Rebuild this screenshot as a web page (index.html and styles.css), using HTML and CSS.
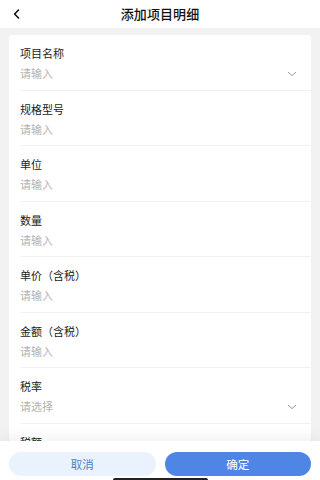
FILE: index.html
```html
<!DOCTYPE html>
<html lang="zh">
<head>
<meta charset="utf-8">
<meta name="viewport" content="width=device-width, initial-scale=1">
<title>添加项目明细</title>
<link rel="stylesheet" href="styles.css">
</head>
<body>
<div class="page">
  <header class="topbar">
    <span class="back">
      <svg width="7" height="10" viewBox="0 0 7 10"><path d="M5.5 1 L1.6 5 L5.5 9" fill="none" stroke="#111" stroke-width="1.6" stroke-linecap="round" stroke-linejoin="round"/></svg>
    </span>
    <h1 class="title">添加项目明细</h1>
  </header>
  <main class="content">
    <div class="card">
      <div class="row">
        <div class="label">项目名称</div>
        <div class="value"><span class="ph">请输入</span><svg class="chev" width="10" height="6" viewBox="0 0 10 6"><path d="M1 1 L5 4.6 L9 1" fill="none" stroke="#9a9a9a" stroke-width="1"/></svg></div>
      </div>
      <div class="row">
        <div class="label">规格型号</div>
        <div class="value"><span class="ph">请输入</span></div>
      </div>
      <div class="row">
        <div class="label">单位</div>
        <div class="value"><span class="ph">请输入</span></div>
      </div>
      <div class="row">
        <div class="label">数量</div>
        <div class="value"><span class="ph">请输入</span></div>
      </div>
      <div class="row">
        <div class="label">单价（含税）</div>
        <div class="value"><span class="ph">请输入</span></div>
      </div>
      <div class="row">
        <div class="label">金额（含税）</div>
        <div class="value"><span class="ph">请输入</span></div>
      </div>
      <div class="row">
        <div class="label">税率</div>
        <div class="value"><span class="ph">请选择</span><svg class="chev" width="10" height="6" viewBox="0 0 10 6"><path d="M1 1 L5 4.6 L9 1" fill="none" stroke="#9a9a9a" stroke-width="1"/></svg></div>
      </div>
      <div class="row">
        <div class="label">税额</div>
      </div>
    </div>
  </main>
  <footer class="footer">
    <div class="buttons">
      <button class="btn btn-cancel">取消</button>
      <button class="btn btn-ok">确定</button>
    </div>
    <div class="home-indicator"></div>
  </footer>
</div>
</body>
</html>
```
FILE: styles.css
```css
* { box-sizing: border-box; }
html, body {
  margin: 0;
  padding: 0;
  height: 100%;
  background: #f2f2f2;
}
body {
  font-family: "Noto Sans CJK SC", "Noto Sans", sans-serif;
  color: #1a1a1a;
}
.page {
  width: 100%;
  height: 480px;
  display: flex;
  flex-direction: column;
  overflow: hidden;
  background: #f2f2f2;
}
.topbar {
  height: 28px;
  flex: none;
  background: #fff;
  display: flex;
  align-items: center;
  justify-content: center;
  position: relative;
}
.back {
  position: absolute;
  left: 13px;
  top: 9px;
  display: flex;
}
.title {
  margin: 0;
  font-size: 13px;
  font-weight: 500;
  line-height: 18px;
  color: #111;
  letter-spacing: 0.1px;
}
.content {
  flex: 1;
  min-height: 0;
  overflow: hidden;
  padding: 7px 9px 0 9px;
}
.card {
  background: #fff;
  border-radius: 3px;
}
.row {
  height: 55.5px;
  margin-left: 11px;
  padding-top: 10px;
  border-bottom: 1px solid #f1f1f1;
}
.label {
  font-size: 11px;
  line-height: 16px;
  color: #1c1c1c;
}
.value {
  margin-top: 4px;
  height: 16px;
  display: flex;
  align-items: center;
  justify-content: space-between;
  padding-right: 14px;
}
.ph {
  font-size: 11px;
  line-height: 16px;
  color: #b3b3b3;
}
.chev {
  display: block;
  margin-top: 1px;
}
.footer {
  flex: none;
  height: 39px;
  background: #fff;
  box-shadow: 0 -5px 12px rgba(0, 0, 0, 0.05);
  padding-top: 11px;
  position: relative;
}
.buttons {
  display: flex;
  gap: 9px;
  padding: 0 9px;
}
.btn {
  flex: 1;
  height: 24px;
  border: none;
  border-radius: 12px;
  font-family: "Noto Sans CJK SC", "Noto Sans", sans-serif;
  font-size: 11.5px;
  line-height: 24px;
  padding: 0;
}
.btn-cancel {
  background: #eaf3fd;
  color: #4f7fc9;
}
.btn-ok {
  background: #4f86e6;
  color: #fff;
}
.home-indicator {
  width: 95px;
  height: 4px;
  border-radius: 2px;
  background: #222;
  margin: 2px auto 0;
}
```
